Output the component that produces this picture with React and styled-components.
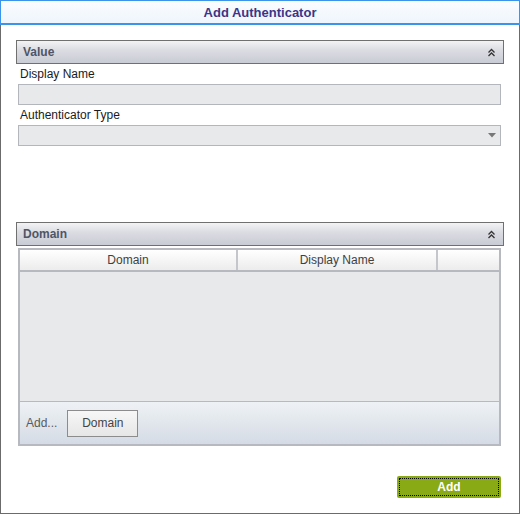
import React from 'react';
import styled, { createGlobalStyle } from 'styled-components';

const GlobalStyle = createGlobalStyle`
  html, body {
    margin: 0;
    padding: 0;
    background: #ffffff;
  }
  * {
    box-sizing: border-box;
  }
`;

const Window = styled.div`
  width: 520px;
  height: 514px;
  display: flex;
  flex-direction: column;
  font-family: "Liberation Sans", Arial, sans-serif;
  font-size: 12px;
  color: #1e1e1e;
  background: #ffffff;
`;

const TitleBar = styled.div`
  height: 25px;
  flex: none;
  display: flex;
  align-items: center;
  justify-content: center;
  border: 1px solid #3a95ea;
  border-bottom-width: 2px;
  background: linear-gradient(#fbfdff, #eef5fc);
  color: #3d3489;
  font-weight: bold;
  font-size: 13px;
  padding-top: 1px;
`;

const Body = styled.div`
  flex: 1;
  display: flex;
  flex-direction: column;
  border: 1px solid #6b6b6b;
  border-top: none;
  padding: 15px;
`;

const GroupHeader = styled.div`
  height: 24px;
  flex: none;
  display: flex;
  align-items: center;
  justify-content: space-between;
  border: 1px solid #707070;
  background: linear-gradient(#f3f3f5 0%, #dcdde3 40%, #c9cbd5 100%);
  padding: 0 7px 0 6px;
  color: #4f5566;
  font-weight: bold;
  font-size: 12px;
`;

const Fields = styled.div`
  display: flex;
  flex-direction: column;
  padding: 0 3px 0 2px;
`;

const Label = styled.div`
  height: 20px;
  display: flex;
  align-items: center;
  padding-left: 2px;
  color: #1b1b1b;
`;

const Input = styled.div`
  height: 21px;
  border: 1px solid #b3b7bd;
  background: #e8e9eb;
  display: flex;
  align-items: center;
  justify-content: flex-end;
  padding-right: 4px;
`;

const Spacer = styled.div`
  height: ${(p) => p.$h}px;
  flex: none;
`;

const Grid = styled.div`
  margin: 2px 3px 0 2px;
  height: 198px;
  display: flex;
  flex-direction: column;
  border: 2px solid #b6bac0;
  background: #e8e9eb;
`;

const HeadRow = styled.div`
  height: 22px;
  flex: none;
  display: grid;
  grid-template-columns: 216px 200px 1fr;
  border-bottom: 2px solid #b6bac0;
  background: linear-gradient(#ffffff, #ececec);
`;

const HeadCell = styled.div`
  display: flex;
  align-items: center;
  justify-content: center;
  color: #3f3f3f;
  border-left: ${(p) => (p.$first ? 'none' : '2px solid #c3c6cb')};
`;

const GridBody = styled.div`
  flex: 1;
`;

const GridFooter = styled.div`
  height: 43px;
  flex: none;
  display: flex;
  align-items: center;
  gap: 10px;
  padding-left: 6px;
  border-top: 1px solid #b6bac0;
  background: linear-gradient(#eef2f5, #d5dbe5);
  color: #5a5a5a;
`;

const SmallButton = styled.div`
  width: 71px;
  height: 27px;
  display: flex;
  align-items: center;
  justify-content: center;
  border: 1px solid #8c8c8c;
  background: linear-gradient(#f7f7f7, #e6e6e6);
  color: #444;
`;

const Actions = styled.div`
  margin-top: auto;
  display: flex;
  justify-content: flex-end;
  padding-right: 3px;
`;

const PrimaryButton = styled.div`
  width: 104px;
  height: 22px;
  border-radius: 2px;
  background: #89a915;
  padding: 2px;
  display: flex;
`;

const FocusRing = styled.div`
  flex: 1;
  display: flex;
  align-items: center;
  justify-content: center;
  border: 1px dotted #000;
  color: #ffffff;
  font-weight: bold;
  font-size: 12px;
`;

const Chevrons = () => (
  <svg width="9" height="9" viewBox="0 0 9 9">
    <path d="M1.5 4.5 L4.5 1.5 L7.5 4.5 M1.5 8 L4.5 5 L7.5 8" fill="none" stroke="#333" strokeWidth="1.3" />
  </svg>
);

const Caret = () => (
  <svg width="8" height="5" viewBox="0 0 8 5">
    <path d="M0 0 L8 0 L4 4.5 Z" fill="#777" />
  </svg>
);

export default function App() {
  return (
    <>
      <GlobalStyle />
      <Window>
        <TitleBar>Add Authenticator</TitleBar>
        <Body>
          <GroupHeader>
            <span>Value</span>
            <Chevrons />
          </GroupHeader>
          <Fields>
            <Label>Display Name</Label>
            <Input />
            <Label>Authenticator Type</Label>
            <Input>
              <Caret />
            </Input>
          </Fields>
          <Spacer $h={76} />
          <GroupHeader>
            <span>Domain</span>
            <Chevrons />
          </GroupHeader>
          <Grid>
            <HeadRow>
              <HeadCell $first>Domain</HeadCell>
              <HeadCell>Display Name</HeadCell>
              <HeadCell />
            </HeadRow>
            <GridBody />
            <GridFooter>
              <span>Add...</span>
              <SmallButton>Domain</SmallButton>
            </GridFooter>
          </Grid>
          <Actions>
            <PrimaryButton>
              <FocusRing>Add</FocusRing>
            </PrimaryButton>
          </Actions>
        </Body>
      </Window>
    </>
  );
}
